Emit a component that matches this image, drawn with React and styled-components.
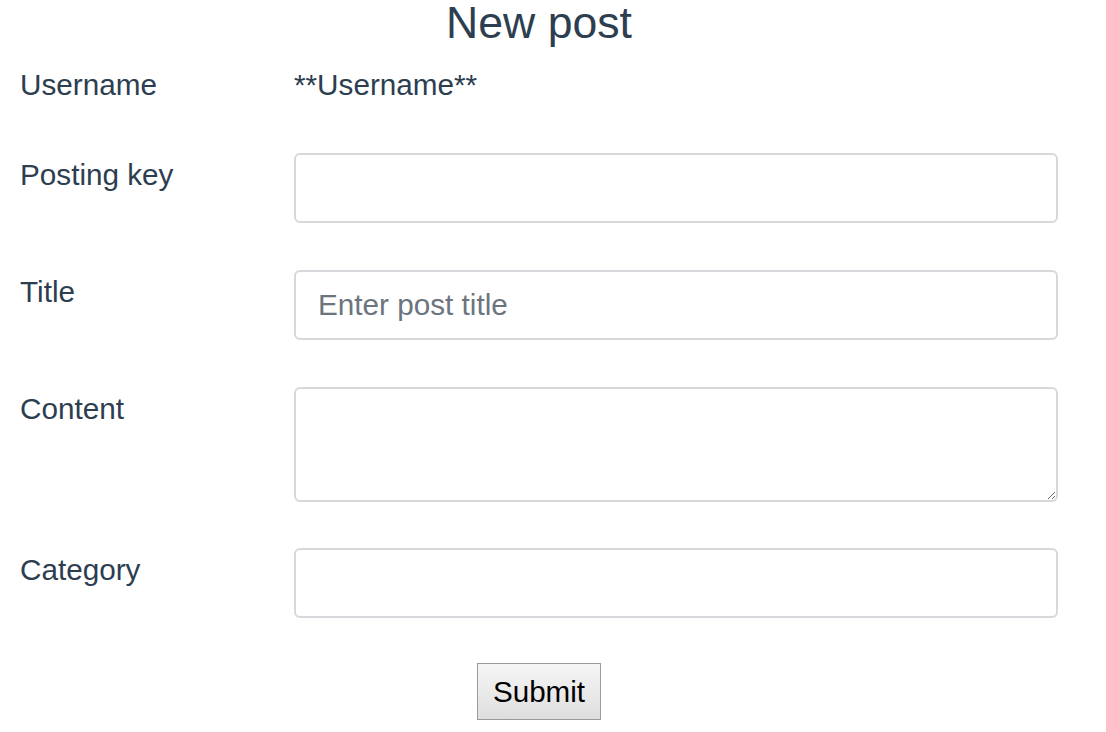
import React from "react";
import styled, { createGlobalStyle } from "styled-components";

const Global = createGlobalStyle`
  html, body { margin: 0; padding: 0; background: #fff; }
  body { font-family: "Liberation Sans", Arial, sans-serif; color: #2c3e50; }
  * { box-sizing: border-box; }
`;

const Page = styled.div`
  width: 1078px;
  padding: 0 20px;
`;

const Heading = styled.h1`
  margin: 0 0 17px;
  padding-top: 1px;
  font-size: 44.6px;
  font-weight: 400;
  line-height: 43px;
  text-align: center;
`;

const Form = styled.form`
  display: flex;
  flex-direction: column;
  gap: 47px;
`;

const Row = styled.div`
  display: grid;
  grid-template-columns: 274px 1fr;
  align-items: start;
  padding-top: ${(p) => (p.$plain ? "2px" : "0")};
  height: ${(p) => (p.$plain ? "45px" : "auto")};
`;

const Label = styled.label`
  font-size: 29.7px;
  line-height: 43px;
`;

const Value = styled.div`
  font-size: 29.7px;
  line-height: 43px;
`;

const fieldCss = `
  width: 100%;
  border: 2px solid #d6d8db;
  border-radius: 6px;
  background: #fff;
  font-family: "Liberation Sans", Arial, sans-serif;
  font-size: 29.7px;
  color: #495057;
  padding: 0 22px;
  outline: none;
  &::placeholder { color: #6c757d; }
`;

const Input = styled.input`
  ${fieldCss}
  height: 70px;
  display: block;
`;

const TextArea = styled.textarea`
  ${fieldCss}
  height: 115px;
  display: block;
  padding: 10px 22px;
  resize: vertical;
  margin-bottom: -1px;
`;

const Actions = styled.div`
  display: flex;
  justify-content: center;
  margin-top: -2px;
`;

const Button = styled.button`
  height: 57px;
  padding: 0 15px;
  font-family: "Liberation Sans", Arial, sans-serif;
  font-size: 29.6px;
  color: #000;
  border: 1px solid #9a9a9a;
  border-radius: 0;
  background: linear-gradient(#f6f6f6, #dedede);
  cursor: pointer;
`;

export default function App() {
  return (
    <>
      <Global />
      <Page>
        <Heading>New post</Heading>
        <Form onSubmit={(e) => e.preventDefault()}>
          <Row $plain>
            <Label>Username</Label>
            <Value>**Username**</Value>
          </Row>
          <Row>
            <Label htmlFor="key">Posting key</Label>
            <Input id="key" type="password" />
          </Row>
          <Row>
            <Label htmlFor="title">Title</Label>
            <Input id="title" placeholder="Enter post title" />
          </Row>
          <Row>
            <Label htmlFor="content">Content</Label>
            <TextArea id="content" />
          </Row>
          <Row>
            <Label htmlFor="cat">Category</Label>
            <Input id="cat" />
          </Row>
          <Actions>
            <Button type="submit">Submit</Button>
          </Actions>
        </Form>
      </Page>
    </>
  );
}
